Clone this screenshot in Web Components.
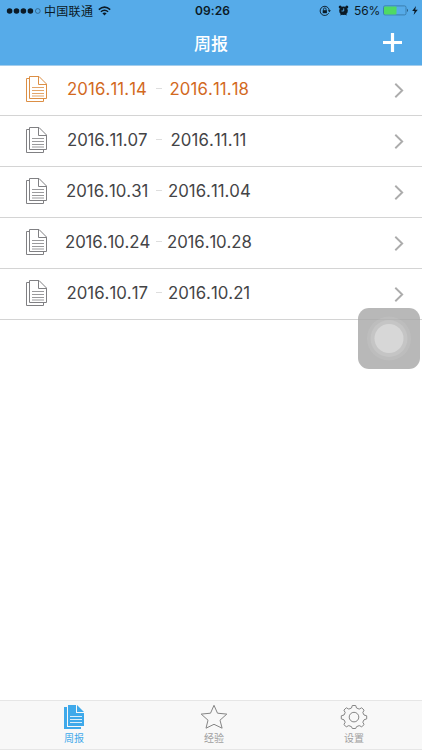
<!DOCTYPE html>
<html lang="zh-CN">
<head>
<meta charset="utf-8">
<title>周报</title>
<style>
  body {
    margin: 0;
    width: 422px;
    height: 750px;
    overflow: hidden;
    background: #fff;
    font-family: Inter, "Noto Sans CJK SC", sans-serif;
  }
  .shift-1 { --from: 18px; --to: 7.5px; --from-track: 0.1px; --to-track: 0.1px; }
  .shift-2 { --from: 18px; --to: 8.5px; --from-track: -0.1px; --to-track: 0.1px; }
  .shift-3 { --from: 17px; --to: 6px; }
  .shift-4 { --from: 16px; --to: 5px; --from-track: -0.1px; --to-track: -0.1px; }
  .shift-5 { --from: 17.5px; --to: 6px; }
</style>
</head>
<body>
<weekly-app>
  <status-bar slot="top" carrier="中国联通" time="09:26" battery="56%"></status-bar>
  <nav-bar slot="top">周报</nav-bar>
  <report-row class="shift-1" from="2016.11.14" to="2016.11.18" current></report-row>
  <report-row class="shift-2" from="2016.11.07" to="2016.11.11"></report-row>
  <report-row class="shift-3" from="2016.10.31" to="2016.11.04"></report-row>
  <report-row class="shift-4" from="2016.10.24" to="2016.10.28"></report-row>
  <report-row class="shift-5" from="2016.10.17" to="2016.10.21"></report-row>
  <assistive-touch slot="overlay"></assistive-touch>
  <tab-item slot="tabs" icon="docs" active>周报</tab-item>
  <tab-item slot="tabs" icon="star">经验</tab-item>
  <tab-item slot="tabs" icon="gear">设置</tab-item>
</weekly-app>

<script>
function attach(el, html) {
  const template = document.createElement("template");
  template.innerHTML = html;
  el.attachShadow({ mode: "open" });
  el.shadowRoot.appendChild(template.content.cloneNode(true));
}

class WeeklyApp extends HTMLElement {
  constructor() {
    super();
    attach(this, `
      <style>
        :host {
          display: flex;
          flex-direction: column;
          position: relative;
          height: 750px;
        }
        header { background: #56abe9; height: 65px; }
        main { flex: 1; box-shadow: inset 0 1px #a4cdec; }
        footer {
          display: flex;
          box-sizing: border-box;
          height: 50px;
          padding-left: 4px;
          background: #f8f8f8;
          border: 1px solid #e6e6e6;
          border-width: 1px 0;
        }
      </style>
      <header><slot name="top"></slot></header>
      <main><slot></slot></main>
      <footer><slot name="tabs"></slot></footer>
      <slot name="overlay"></slot>
    `);
  }
}

class StatusBar extends HTMLElement {
  constructor() {
    super();
    attach(this, `
      <style>
        :host {
          display: grid;
          grid-template-columns: 1fr auto 1fr;
          align-items: center;
          height: 21px;
          padding: 0 4px 0 6px;
          font-size: 12px;
          color: #0b1a26;
        }
        .side { display: flex; align-items: center; }
        .right { justify-content: flex-end; }
        .carrier { margin: 0 5px 0 3px; font: 12px/20px "Noto Sans CJK SC", sans-serif; letter-spacing: 0.3px; }
        .time { font-weight: 600; letter-spacing: 0.1px; padding-left: 1px; }
        .percent { margin-left: 5px; letter-spacing: -0.2px; }
        .battery { margin: 0 3px; }
        .alarm { margin-left: 7px; }
        svg { display: block; }
      </style>
      <div class="side">
        <svg width="35" height="8">
          <g fill="#0b1a26">
            <circle cx="3.6" cy="4" r="2.8"/><circle cx="10.5" cy="4" r="2.8"/>
            <circle cx="17.4" cy="4" r="2.8"/><circle cx="24.4" cy="4" r="2.8"/>
          </g>
          <circle cx="31.8" cy="4" r="2.4" fill="none" stroke="#2b5372" stroke-width="0.7"/>
        </svg>
        <span class="carrier"></span>
        <svg width="13" height="10" viewBox="0 0 13 10" fill="none" stroke="#0b1a26" stroke-width="1.5">
          <path d="M.8 3.6Q6.5-1.4 12.2 3.6M2.9 5.8Q6.5 2.6 10.1 5.8"/>
          <path d="M6.5 9.4L4.4 7.3Q6.5 5.7 8.6 7.3Z" fill="#0b1a26" stroke="none"/>
        </svg>
      </div>
      <span class="time"></span>
      <div class="side right">
        <svg width="12" height="12" viewBox="0 0 12 12" fill="none" stroke="#0b1a26">
          <path d="M9.7 8.2A4.6 4.6 0 1 1 10.3 5.4" stroke-width="0.9"/>
          <path d="M8.8 5.2H11.9L10.4 7.2Z" fill="#0b1a26" stroke="none"/>
          <path d="M4.5 5.4V4.2a1.3 1.3 0 0 1 2.6 0V5.4" stroke-width="0.8"/>
          <rect x="3.7" y="5.2" width="4.2" height="3" fill="#0b1a26" stroke="none"/>
        </svg>
        <svg class="alarm" width="11" height="11" viewBox="0 0 11 11">
          <g fill="#0b1a26">
            <circle cx="5.5" cy="5.8" r="4.3"/>
            <circle cx="2.2" cy="2.1" r="1.5"/><circle cx="8.8" cy="2.1" r="1.5"/>
            <path d="M2 10.6L3 8.5L4.5 9.5ZM9 10.6L8 8.5L6.5 9.5Z"/>
          </g>
          <path d="M5.7 3.3V6H3.5" fill="none" stroke="#56abe9" stroke-width="0.9"/>
        </svg>
        <span class="percent"></span>
        <svg class="battery" width="26" height="11">
          <rect x="0.5" y="0.9" width="22.5" height="9" rx="1.5" fill="none" stroke="#34749f" stroke-width="0.8"/>
          <rect x="1" y="1.4" width="12.5" height="8" rx="0.8" fill="#4fd964"/>
          <path d="M24 3.8Q26 5.4 24 7Z" fill="#28577c"/>
        </svg>
        <svg width="6" height="9" viewBox="0 0 6 9"><path d="M4 0L.2 5H2.6L1.6 9L5.8 3.7H3.2Z" fill="#0b1a26"/></svg>
      </div>
    `);
    this.shadowRoot.querySelector(".carrier").textContent = this.getAttribute("carrier");
    this.shadowRoot.querySelector(".time").textContent = this.getAttribute("time");
    this.shadowRoot.querySelector(".percent").textContent = this.getAttribute("battery");
  }
}

class NavBar extends HTMLElement {
  constructor() {
    super();
    attach(this, `
      <style>
        :host {
          display: grid;
          grid-template-columns: 1fr auto 1fr;
          align-items: center;
          height: 43px;
          color: #fff;
          font: 500 17px/43px "Noto Sans CJK SC", sans-serif;
        }
        svg { justify-self: end; margin-right: 20px; }
      </style>
      <i></i>
      <span><slot></slot></span>
      <svg width="19" height="19"><path d="M9.5 0V19M0 9.5H19" stroke="#fff" stroke-width="3.2"/></svg>
    `);
  }
}

class ReportRow extends HTMLElement {
  constructor() {
    super();
    attach(this, `
      <style>
        :host {
          display: flex;
          box-sizing: border-box;
          height: 51px;
          padding: 0 18px 0 25px;
          border-bottom: 1px solid #d4d4d4;
          color: #444446;
          --line: #808083;
        }
        :host([current]) { color: #d2691e; --line: #dc8f45; }
        .icon { margin-top: 9px; }
        .dates {
          display: grid;
          grid-template-columns: 107px 6px auto;
          font-size: 16.8px;
          line-height: 49px;
          font-kerning: none;
        }
        .from { padding-left: var(--from); letter-spacing: var(--from-track, 0); }
        .to { padding-left: var(--to); letter-spacing: var(--to-track, 0); }
        .dash { height: 1px; margin-top: 23px; background: #dedede; }
        .chevron { margin: 17px 0 0 auto; }
      </style>
      <svg class="icon" width="24" height="29" fill="none" stroke="var(--line)">
        <path d="M4.5 2.5H14L21.5 10V24.5H4.5Z M13.5 2.5V10.5H21.5"/>
        <path d="M4.5 4.5H1.5V27.5H18.5V24.5"/>
        <path d="M7 13.5H19M7 16.5H19M7 19.5H19M7 22H19" stroke-width="0.8"/>
      </svg>
      <div class="dates"><span class="from"></span><i class="dash"></i><span class="to"></span></div>
      <svg class="chevron" width="10" height="16"><path d="M1.3 1.7L8.2 8.5L1.3 15.3" fill="none" stroke="#acacac" stroke-width="1.9"/></svg>
    `);
    this.shadowRoot.querySelector(".from").textContent = this.getAttribute("from");
    this.shadowRoot.querySelector(".to").textContent = this.getAttribute("to");
  }
}

class AssistiveTouch extends HTMLElement {
  constructor() {
    super();
    // floats over the list, the row line shows through a little
    attach(this, `
      <style>
        :host {
          position: absolute;
          left: 358px;
          top: 308px;
          width: 62px;
          height: 61px;
          border-radius: 11px;
          background: rgba(168, 168, 168, 0.82);
        }
        svg { display: block; }
      </style>
      <svg width="62" height="61">
        <circle cx="31" cy="30.5" r="22" fill="#fff" fill-opacity="0.08"/>
        <circle cx="31" cy="30.5" r="18.5" fill="#fff" fill-opacity="0.12"/>
        <circle cx="31" cy="30.5" r="14.5" fill="#d7d7d7"/>
      </svg>
    `);
  }
}

const tabIcons = {
  docs: `
    <path d="M4 4V26H21V24H7V4Z" fill="#3fa9ea"/>
    <path d="M8 2H16V10H24V23H8Z" fill="#3fa9ea"/>
    <path d="M17 2L24 9H17Z" fill="#3fa9ea"/>
    <path d="M10 13.5H22M10 16.5H22M10 19.5H22" stroke="#dceefa"/>`,
  star: `<path d="M14 2.3L17.5 10.2L26.8 11.1L20 17.2L22.1 25.2L14 21.3L6 25.2L8 17.2L1.2 11.1L10.5 10.2Z" fill="none" stroke="#858585"/>`,
  gear: `
    <path d="M11.5 5L12.3 2.5H15.7L16.5 5L19.2 6.1L21.7 4.8L24.1 7.1L22.8 9.6L24 12L26.7 12.8V15.9L24 16.8L22.8 19.2L24.1 21.6L21.7 23.8L19.2 22.6L16.5 23.7L15.7 25.5H12.3L11.5 23.7L8.8 22.6L6.3 23.8L3.9 21.6L5.2 19.2L4 16.8L1.3 15.9V12.8L4 12L5.2 9.6L3.9 7.1L6.3 4.8L8.8 6.1Z" fill="none" stroke="#858585" stroke-linejoin="round"/>
    <circle cx="14" cy="14.1" r="4.8" fill="none" stroke="#858585"/>`
};

class TabItem extends HTMLElement {
  constructor() {
    super();
    attach(this, `
      <style>
        :host {
          display: flex;
          flex: none;
          flex-direction: column;
          align-items: center;
          width: 140px;
          padding-top: 2px;
          color: #a0a0a0;
          font: 10px/14px "Noto Sans CJK SC", sans-serif;
        }
        :host([active]) { color: #3fa9ea; }
      </style>
      <svg width="28" height="28">${tabIcons[this.getAttribute("icon")]}</svg>
      <span><slot></slot></span>
    `);
  }
}

customElements.define("weekly-app", WeeklyApp);
customElements.define("status-bar", StatusBar);
customElements.define("nav-bar", NavBar);
customElements.define("report-row", ReportRow);
customElements.define("assistive-touch", AssistiveTouch);
customElements.define("tab-item", TabItem);
</script>
</body>
</html>
